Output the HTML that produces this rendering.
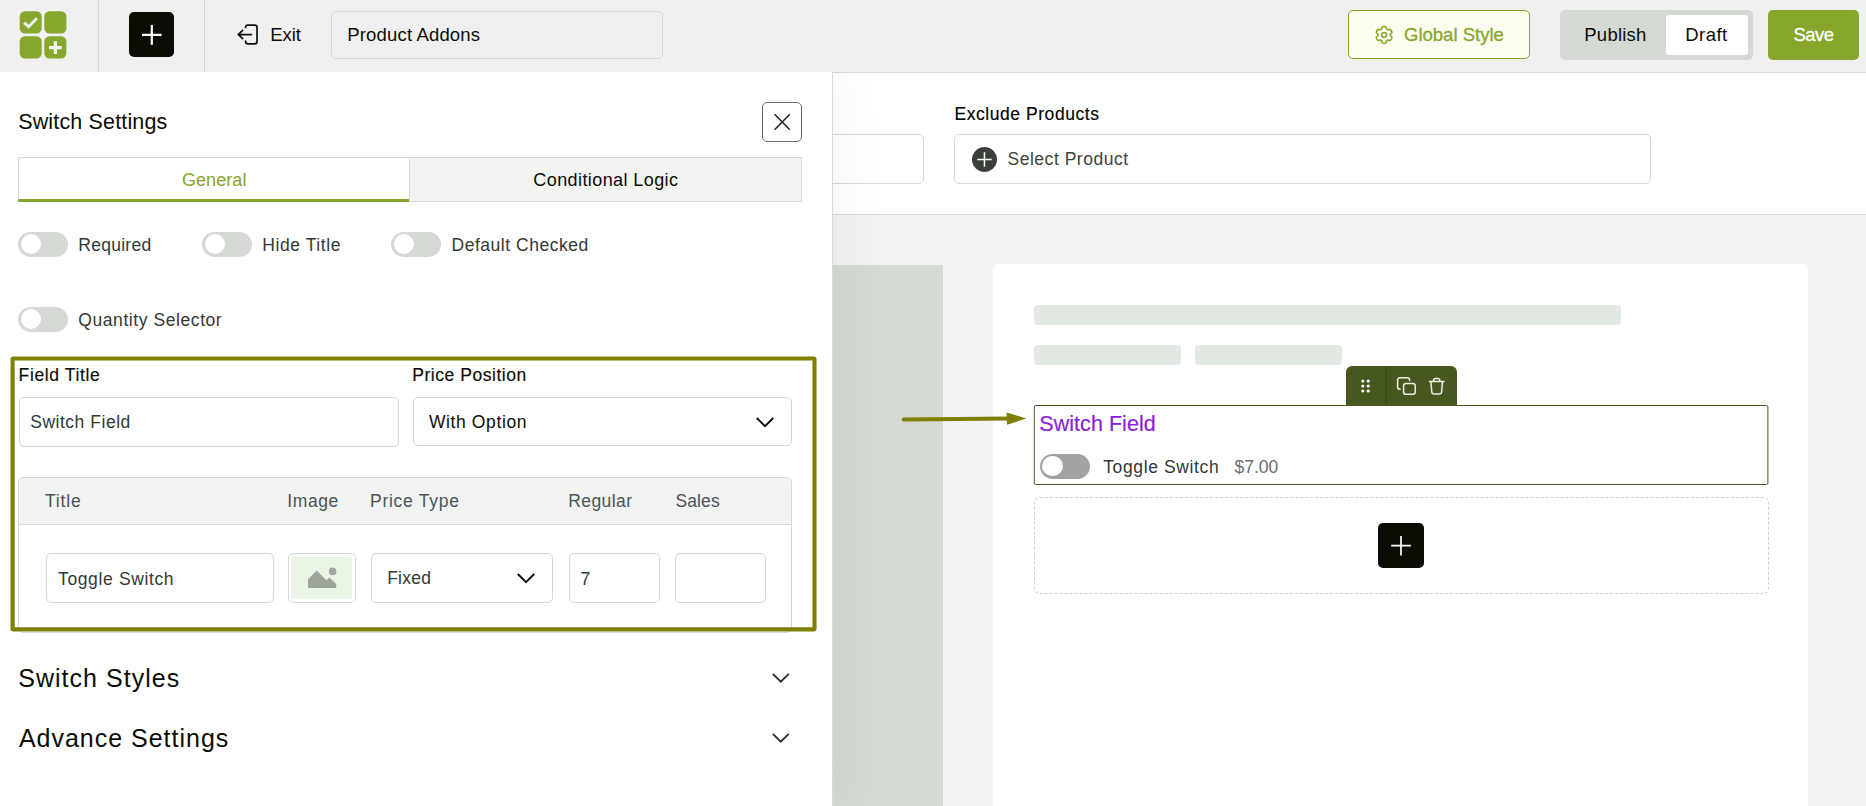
<!DOCTYPE html>
<html lang="en">
<head>
<meta charset="utf-8">
<title>Product Addons</title>
<style>
*{box-sizing:border-box;margin:0;padding:0}
html,body{width:1866px;height:806px;overflow:hidden}
body{position:relative;background:#f2f4f2;font-family:"Liberation Sans",sans-serif;color:#0b0d05}
.a{position:absolute}
.t{position:absolute;white-space:nowrap;line-height:1;font-family:"Liberation Sans",sans-serif}
.box{position:absolute;border:1px solid #d5d9d4;border-radius:5px;background:#fff}
.tg{position:absolute;width:50px;height:25px;border-radius:13px;background:#d5d9d4}
.tg::after{content:"";position:absolute;left:2.6px;top:1.8px;width:20.5px;height:20.5px;border-radius:50%;background:#fff}
svg{position:absolute;overflow:visible}
</style>
</head>
<body>
<!-- right top white section -->
<div class="a" style="left:832px;top:72px;width:1034px;height:143px;background:#fff;border-bottom:1px solid #d5d9d4"></div>
<div class="box" style="left:700px;top:134px;width:224px;height:50px"></div>
<div class="box" style="left:954px;top:134px;width:697px;height:50px"></div>
<div class="a" style="left:972px;top:147px;width:25px;height:25px;border-radius:50%;background:#3b3f39"></div>
<svg style="left:972px;top:147px" width="25" height="25" viewBox="0 0 25 25"><path d="M12.45 5.3v14.4M5.3 12.5h14.4" stroke="#fff" stroke-width="1.5" fill="none"/></svg>
<!-- dark column -->
<div class="a" style="left:832px;top:265px;width:111px;height:541px;background:#d5d9d4"></div>
<!-- white card -->
<div class="a" style="left:993px;top:264px;width:815px;height:560px;background:#fff;border-radius:7px"></div>
<div class="a" style="left:1034px;top:305px;width:587px;height:20px;border-radius:4px;background:#e2e9e3"></div>
<div class="a" style="left:1034px;top:345px;width:147px;height:20px;border-radius:4px;background:#e2e9e3"></div>
<div class="a" style="left:1195px;top:345px;width:147px;height:20px;border-radius:4px;background:#e2e9e3"></div>
<!-- toolbar -->
<div class="a" style="left:1346px;top:366px;width:111px;height:40px;border-radius:6px 6px 0 0;background:#46581f"></div>
<div class="a" style="left:1385px;top:366px;width:2px;height:40px;background:#3e4e1a"></div>
<svg style="left:1346px;top:366px" width="111" height="40" viewBox="0 0 111 40">
 <g fill="#fff"><circle cx="16.8" cy="15.1" r="1.55"/><circle cx="22.2" cy="15.1" r="1.55"/><circle cx="16.8" cy="20" r="1.55"/><circle cx="22.2" cy="20" r="1.55"/><circle cx="16.8" cy="25" r="1.55"/><circle cx="22.2" cy="25" r="1.55"/></g>
 <g fill="none" stroke="#eeeee6" stroke-width="1.5" stroke-linecap="round" stroke-linejoin="round">
  <rect x="57.6" y="17.5" width="11.6" height="10.8" rx="2.4"/>
  <path d="M54.2 23.3h-.4a2.2 2.2 0 0 1-2.2-2.2v-7.1a2.2 2.2 0 0 1 2.2-2.2h7.6a2.2 2.2 0 0 1 2.2 2.2v.6"/>
  <path d="M83.4 15.4h14.6M87.6 15.2v-.9a1.8 1.8 0 0 1 1.8-1.8h2.6a1.8 1.8 0 0 1 1.8 1.8v.9M84.9 15.6l.9 10.4a2.2 2.2 0 0 0 2.2 2h5.4a2.2 2.2 0 0 0 2.2-2l.9-10.4"/>
 </g>
</svg>
<!-- field box -->
<svg style="left:1020px;top:395px" width="760" height="100" viewBox="1020 395 760 100"><rect x="1034.3" y="405.5" width="733.6" height="79" rx="1.5" fill="#fff" stroke="#46581f" stroke-width="1"/></svg>
<div class="tg" style="left:1039.5px;top:454px;background:#a3a3a3"></div>
<!-- dashed add area -->
<div class="a" style="left:1034px;top:497px;width:735px;height:97px;border:1px dashed #cdd3cc;border-radius:6px"></div>
<div class="a" style="left:1378px;top:523px;width:46px;height:45px;border-radius:5px;background:#0b0d05"></div>
<svg style="left:1378px;top:523px" width="46" height="45" viewBox="0 0 46 45"><path d="M23 13v19.5M13.2 22.7h19.6" stroke="#fff" stroke-width="1.7" fill="none"/></svg>
<!-- arrow -->
<svg style="left:0;top:0" width="1866" height="806" viewBox="0 0 1866 806"><path d="M903.7 419.6L1010 418.5" stroke="#808000" stroke-width="4" stroke-linecap="round" fill="none"/><path d="M1006.6 412.6L1026.3 418.4L1007 424.8Z" fill="#808000"/></svg>

<!-- left panel -->
<div class="a" style="left:832px;top:72px;width:1034px;height:1px;background:#d5dbd5"></div>
<div class="a" style="left:0;top:72px;width:832px;height:734px;background:#fff;box-shadow:0 0 55px rgba(40,50,40,.07)"></div>
<div class="a" style="left:832px;top:72px;width:1px;height:734px;background:#d5dbd5"></div>
<!-- top bar -->
<div class="a" style="left:0;top:0;width:1866px;height:72px;background:#f0f0f0"></div>
<div class="a" style="left:98px;top:0;width:1px;height:72px;background:#d5d9d4"></div>
<div class="a" style="left:204px;top:0;width:1px;height:72px;background:#d5d9d4"></div>
<!-- logo -->
<svg style="left:0;top:0" width="98" height="72" viewBox="0 0 98 72">
 <g fill="#86a62c"><rect x="19.7" y="11.3" width="22" height="22.2" rx="5.3"/><rect x="44.3" y="11.3" width="22.1" height="22.2" rx="5.3"/><rect x="19.7" y="36.3" width="22" height="22.2" rx="5.3"/><rect x="44.3" y="36.3" width="22.1" height="22.2" rx="5.3"/></g>
 <path d="M24.1 22.7L28.6 26.7L36.9 18.3" stroke="#f0f0f0" stroke-width="3" fill="none"/>
 <path d="M55.4 41.3V53.9M49.1 47.6H61.7" stroke="#f0f0f0" stroke-width="3.4" fill="none"/>
</svg>
<div class="a" style="left:129px;top:12px;width:45px;height:45px;border-radius:5px;background:#0b0d05"></div>
<svg style="left:129px;top:12px" width="45" height="45" viewBox="0 0 45 45"><path d="M22.8 13v19.8M13 22.9h19.6" stroke="#fff" stroke-width="2.2" fill="none"/></svg>
<!-- exit icon -->
<svg style="left:230px;top:18px" width="34" height="34" viewBox="230 18 34 34"><g fill="none" stroke="#12140c" stroke-width="1.75" stroke-linecap="butt" stroke-linejoin="round"><path d="M245.6 28.3V27.5a2.3 2.3 0 0 1 2.3-2.3H254.7a2.3 2.3 0 0 1 2.3 2.3V41.5a2.3 2.3 0 0 1-2.3 2.3H247.9a2.3 2.3 0 0 1-2.3-2.3V40.6"/><path d="M252.1 34.5H238.4M243.1 29.8L238.3 34.5L243.1 39.2" stroke-linejoin="miter"/></g></svg>
<div class="a" style="left:331px;top:11px;width:332px;height:48px;border:1px solid #d5d9d4;border-radius:5px"></div>
<!-- global style -->
<div class="a" style="left:1348px;top:10px;width:182px;height:49px;border:1px solid #86a62c;border-radius:5px;background:#fcfdf0"></div>
<svg style="left:1370px;top:20px" width="30" height="30" viewBox="1370 20 30 30"><g fill="none" stroke="#86a62c" stroke-width="1.6" stroke-linejoin="round"><path d="M1390.30 34.90L1390.31 34.68L1390.34 34.46L1390.42 34.24L1390.57 33.99L1390.84 33.71L1391.21 33.39L1391.56 33.04L1391.78 32.70L1391.86 32.38L1391.84 32.08L1391.77 31.80L1391.67 31.53L1391.56 31.26L1391.43 31.00L1391.29 30.75L1391.14 30.50L1390.98 30.26L1390.81 30.03L1390.62 29.81L1390.41 29.61L1390.16 29.44L1389.85 29.35L1389.44 29.37L1388.96 29.50L1388.50 29.66L1388.13 29.75L1387.84 29.76L1387.60 29.71L1387.39 29.63L1387.20 29.53L1387.02 29.41L1386.84 29.27L1386.68 29.09L1386.55 28.84L1386.44 28.47L1386.35 27.99L1386.22 27.51L1386.03 27.14L1385.80 26.92L1385.53 26.79L1385.25 26.71L1384.97 26.66L1384.68 26.62L1384.39 26.61L1384.10 26.60L1383.81 26.61L1383.52 26.62L1383.23 26.66L1382.95 26.71L1382.67 26.79L1382.40 26.92L1382.17 27.14L1381.98 27.51L1381.85 27.99L1381.76 28.47L1381.65 28.84L1381.52 29.09L1381.36 29.27L1381.18 29.41L1381.00 29.53L1380.81 29.63L1380.60 29.71L1380.36 29.76L1380.07 29.75L1379.70 29.66L1379.24 29.50L1378.76 29.37L1378.35 29.35L1378.04 29.44L1377.79 29.61L1377.58 29.81L1377.39 30.03L1377.22 30.26L1377.06 30.50L1376.91 30.75L1376.77 31.00L1376.64 31.26L1376.53 31.53L1376.43 31.80L1376.36 32.08L1376.34 32.38L1376.42 32.70L1376.64 33.04L1376.99 33.39L1377.36 33.71L1377.63 33.99L1377.78 34.24L1377.86 34.46L1377.89 34.68L1377.90 34.90L1377.89 35.12L1377.86 35.34L1377.78 35.56L1377.63 35.81L1377.36 36.09L1376.99 36.41L1376.64 36.76L1376.42 37.10L1376.34 37.42L1376.36 37.72L1376.43 38.00L1376.53 38.27L1376.64 38.54L1376.77 38.80L1376.91 39.05L1377.06 39.30L1377.22 39.54L1377.39 39.77L1377.58 39.99L1377.79 40.19L1378.04 40.36L1378.35 40.45L1378.76 40.43L1379.24 40.30L1379.70 40.14L1380.07 40.05L1380.36 40.04L1380.60 40.09L1380.81 40.17L1381.00 40.27L1381.18 40.39L1381.36 40.53L1381.52 40.71L1381.65 40.96L1381.76 41.33L1381.85 41.81L1381.98 42.29L1382.17 42.66L1382.40 42.88L1382.67 43.01L1382.95 43.09L1383.23 43.14L1383.52 43.18L1383.81 43.19L1384.10 43.20L1384.39 43.19L1384.68 43.18L1384.97 43.14L1385.25 43.09L1385.53 43.01L1385.80 42.88L1386.03 42.66L1386.22 42.29L1386.35 41.81L1386.44 41.33L1386.55 40.96L1386.68 40.71L1386.84 40.53L1387.02 40.39L1387.20 40.27L1387.39 40.17L1387.60 40.09L1387.84 40.04L1388.13 40.05L1388.50 40.14L1388.96 40.30L1389.44 40.43L1389.85 40.45L1390.16 40.36L1390.41 40.19L1390.62 39.99L1390.81 39.77L1390.98 39.54L1391.14 39.30L1391.29 39.05L1391.43 38.80L1391.56 38.54L1391.67 38.27L1391.77 38.00L1391.84 37.72L1391.86 37.42L1391.78 37.10L1391.56 36.76L1391.21 36.41L1390.84 36.09L1390.57 35.81L1390.42 35.56L1390.34 35.34L1390.31 35.12Z"/><circle cx="1384.1" cy="34.9" r="2.35"/></g></svg>
<!-- publish/draft -->
<div class="a" style="left:1560px;top:10px;width:193px;height:50px;border-radius:5px;background:#d5d9d4"></div>
<div class="a" style="left:1666px;top:15px;width:82px;height:40px;border-radius:3px;background:#fff"></div>
<div class="a" style="left:1768px;top:10px;width:91px;height:50px;border-radius:5px;background:#86a62c"></div>

<!-- panel content -->
<div class="a" style="left:762px;top:102px;width:40px;height:40px;border:1px solid #6c6f6b;border-radius:5px;background:#fff"></div>
<svg style="left:762px;top:102px" width="40" height="40" viewBox="0 0 40 40"><path d="M12.6 12.2l15.2 15.6M27.8 12.2L12.6 27.8" stroke="#1c201a" stroke-width="1.5" fill="none"/></svg>
<!-- tabs -->
<div class="a" style="left:18px;top:157px;width:784px;height:45px;border:1px solid #d5d9d4;background:#f2f4f2"></div>
<div class="a" style="left:19px;top:158px;width:390px;height:41px;background:#fff"></div>
<div class="a" style="left:409px;top:158px;width:1px;height:43px;background:#d5d9d4"></div>
<div class="a" style="left:18px;top:199px;width:391px;height:3px;background:#86a62c"></div>
<!-- toggles -->
<div class="tg" style="left:18px;top:232px"></div>
<div class="tg" style="left:202px;top:232px"></div>
<div class="tg" style="left:391px;top:232px"></div>
<div class="tg" style="left:18px;top:307px"></div>
<!-- inputs -->
<div class="box" style="left:19px;top:397px;width:380px;height:50px"></div>
<div class="box" style="left:413px;top:397px;width:379px;height:49px"></div>
<svg style="left:755px;top:416px" width="20" height="13" viewBox="0 0 20 13"><path d="M1.8 2l8.2 8.2L18.2 2" stroke="#0b0d05" stroke-width="1.9" fill="none"/></svg>
<!-- table -->
<div class="a" style="left:18px;top:477px;width:774px;height:156px;border:1px solid #d5d9d4;border-radius:5px;background:#fff"></div>
<div class="a" style="left:19px;top:478px;width:772px;height:47px;border-bottom:1px solid #d5d9d4;border-radius:4px 4px 0 0;background:#f2f4f2"></div>
<div class="box" style="left:46px;top:553px;width:228px;height:50px"></div>
<div class="box" style="left:288px;top:553px;width:68px;height:50px"></div>
<div class="a" style="left:291px;top:557px;width:61px;height:42px;border-radius:3px;background:#eaf5e5"></div>
<svg style="left:300px;top:560px" width="40" height="30" viewBox="300 560 40 30"><g fill="#9ea59b"><circle cx="332.6" cy="571.4" r="3.8"/><path d="M308 588V579.3L316.7 570.6L326.4 580.2L329.4 577.5L336.2 584.1V588Z"/></g></svg>
<div class="box" style="left:371px;top:553px;width:182px;height:50px"></div>
<svg style="left:516px;top:572px" width="20" height="13" viewBox="0 0 20 13"><path d="M1.8 2l8.2 8.2L18.2 2" stroke="#0b0d05" stroke-width="1.9" fill="none"/></svg>
<div class="box" style="left:569px;top:553px;width:91px;height:50px"></div>
<div class="box" style="left:675px;top:553px;width:91px;height:50px"></div>
<!-- olive highlight -->
<svg style="left:0;top:340px" width="832" height="300" viewBox="0 340 832 300"><rect x="12.6" y="358.5" width="801.9" height="270.9" rx="0.8" fill="none" stroke="#808000" stroke-width="4.1" stroke-linejoin="round"/></svg>
<!-- accordion chevrons -->
<svg style="left:771px;top:672px" width="20" height="12" viewBox="0 0 20 12"><path d="M1.8 1.9L9.8 9.7L17.8 1.9" stroke="#2b302b" stroke-width="1.9" fill="none"/></svg>
<svg style="left:771px;top:732px" width="20" height="12" viewBox="0 0 20 12"><path d="M1.8 1.9L9.8 9.7L17.8 1.9" stroke="#2b302b" stroke-width="1.9" fill="none"/></svg>

<span class="t" style="left:270.20px;top:26.00px;font-size:18.5px;letter-spacing:-0.067px;color:#0b0d05;">Exit</span>
<span class="t" style="left:347.30px;top:26.00px;font-size:18.5px;letter-spacing:0.161px;color:#0b0d05;">Product Addons</span>
<span class="t" style="left:1404.00px;top:26.00px;font-size:18.5px;letter-spacing:0.008px;color:#86a62c;-webkit-text-stroke:0.3px #86a62c;">Global Style</span>
<span class="t" style="left:1584.30px;top:26.00px;font-size:18.5px;letter-spacing:0.237px;color:#0b0d05;">Publish</span>
<span class="t" style="left:1685.20px;top:26.00px;font-size:18.5px;letter-spacing:0.487px;color:#0b0d05;">Draft</span>
<span class="t" style="left:1793.40px;top:26.00px;font-size:18.5px;letter-spacing:-0.527px;color:#ffffff;-webkit-text-stroke:0.3px #ffffff;">Save</span>
<span class="t" style="left:18.20px;top:112.00px;font-size:21.5px;letter-spacing:0.153px;color:#0b0d05;">Switch Settings</span>
<span class="t" style="left:181.90px;top:171.00px;font-size:18px;letter-spacing:0.087px;color:#86a62c;">General</span>
<span class="t" style="left:533.30px;top:171.00px;font-size:18px;letter-spacing:0.415px;color:#0b0d05;">Conditional Logic</span>
<span class="t" style="left:78.30px;top:237.00px;font-size:17.5px;letter-spacing:0.264px;color:#343934;">Required</span>
<span class="t" style="left:262.20px;top:237.00px;font-size:17.5px;letter-spacing:0.592px;color:#343934;">Hide Title</span>
<span class="t" style="left:451.50px;top:237.00px;font-size:17.5px;letter-spacing:0.528px;color:#343934;">Default Checked</span>
<span class="t" style="left:78.30px;top:312.00px;font-size:17.5px;letter-spacing:0.573px;color:#343934;">Quantity Selector</span>
<span class="t" style="left:18.60px;top:367.00px;font-size:17.5px;letter-spacing:0.620px;color:#0b0d05;-webkit-text-stroke:0.15px #0b0d05;">Field Title</span>
<span class="t" style="left:412.30px;top:367.00px;font-size:17.5px;letter-spacing:0.537px;color:#0b0d05;-webkit-text-stroke:0.15px #0b0d05;">Price Position</span>
<span class="t" style="left:30.20px;top:414.00px;font-size:17.5px;letter-spacing:0.525px;color:#343934;">Switch Field</span>
<span class="t" style="left:428.90px;top:414.00px;font-size:17.5px;letter-spacing:0.616px;color:#0b0d05;">With Option</span>
<span class="t" style="left:45.00px;top:493.00px;font-size:17.5px;letter-spacing:0.806px;color:#4b5258;">Title</span>
<span class="t" style="left:287.30px;top:493.00px;font-size:17.5px;letter-spacing:0.588px;color:#4b5258;">Image</span>
<span class="t" style="left:370.00px;top:493.00px;font-size:17.5px;letter-spacing:0.740px;color:#4b5258;">Price Type</span>
<span class="t" style="left:568.30px;top:493.00px;font-size:17.5px;letter-spacing:0.408px;color:#4b5258;">Regular</span>
<span class="t" style="left:675.40px;top:493.00px;font-size:17.5px;letter-spacing:0.138px;color:#4b5258;">Sales</span>
<span class="t" style="left:58.00px;top:571.00px;font-size:17.5px;letter-spacing:0.635px;color:#343934;">Toggle Switch</span>
<span class="t" style="left:387.20px;top:570.00px;font-size:17.5px;letter-spacing:0.228px;color:#343934;">Fixed</span>
<span class="t" style="left:580.40px;top:571.00px;font-size:17.5px;letter-spacing:0.000px;color:#343934;">7</span>
<span class="t" style="left:18.20px;top:666.00px;font-size:25px;letter-spacing:1.031px;color:#0b0d05;">Switch Styles</span>
<span class="t" style="left:18.90px;top:726.00px;font-size:25px;letter-spacing:0.992px;color:#0b0d05;">Advance Settings</span>
<span class="t" style="left:954.50px;top:106.00px;font-size:17.5px;letter-spacing:0.550px;color:#000000;-webkit-text-stroke:0.15px #000000;">Exclude Products</span>
<span class="t" style="left:1007.50px;top:151.00px;font-size:17.5px;letter-spacing:0.520px;color:#3e433d;">Select Product</span>
<span class="t" style="left:1039.30px;top:414.00px;font-size:21.5px;letter-spacing:0.047px;color:#8b1fd9;-webkit-text-stroke:0.2px #8b1fd9;">Switch Field</span>
<span class="t" style="left:1103.20px;top:459.00px;font-size:17.5px;letter-spacing:0.627px;color:#343934;">Toggle Switch</span>
<span class="t" style="left:1234.50px;top:459.00px;font-size:17.5px;letter-spacing:-0.009px;color:#6a6d69;">$7.00</span>
</body>
</html>
